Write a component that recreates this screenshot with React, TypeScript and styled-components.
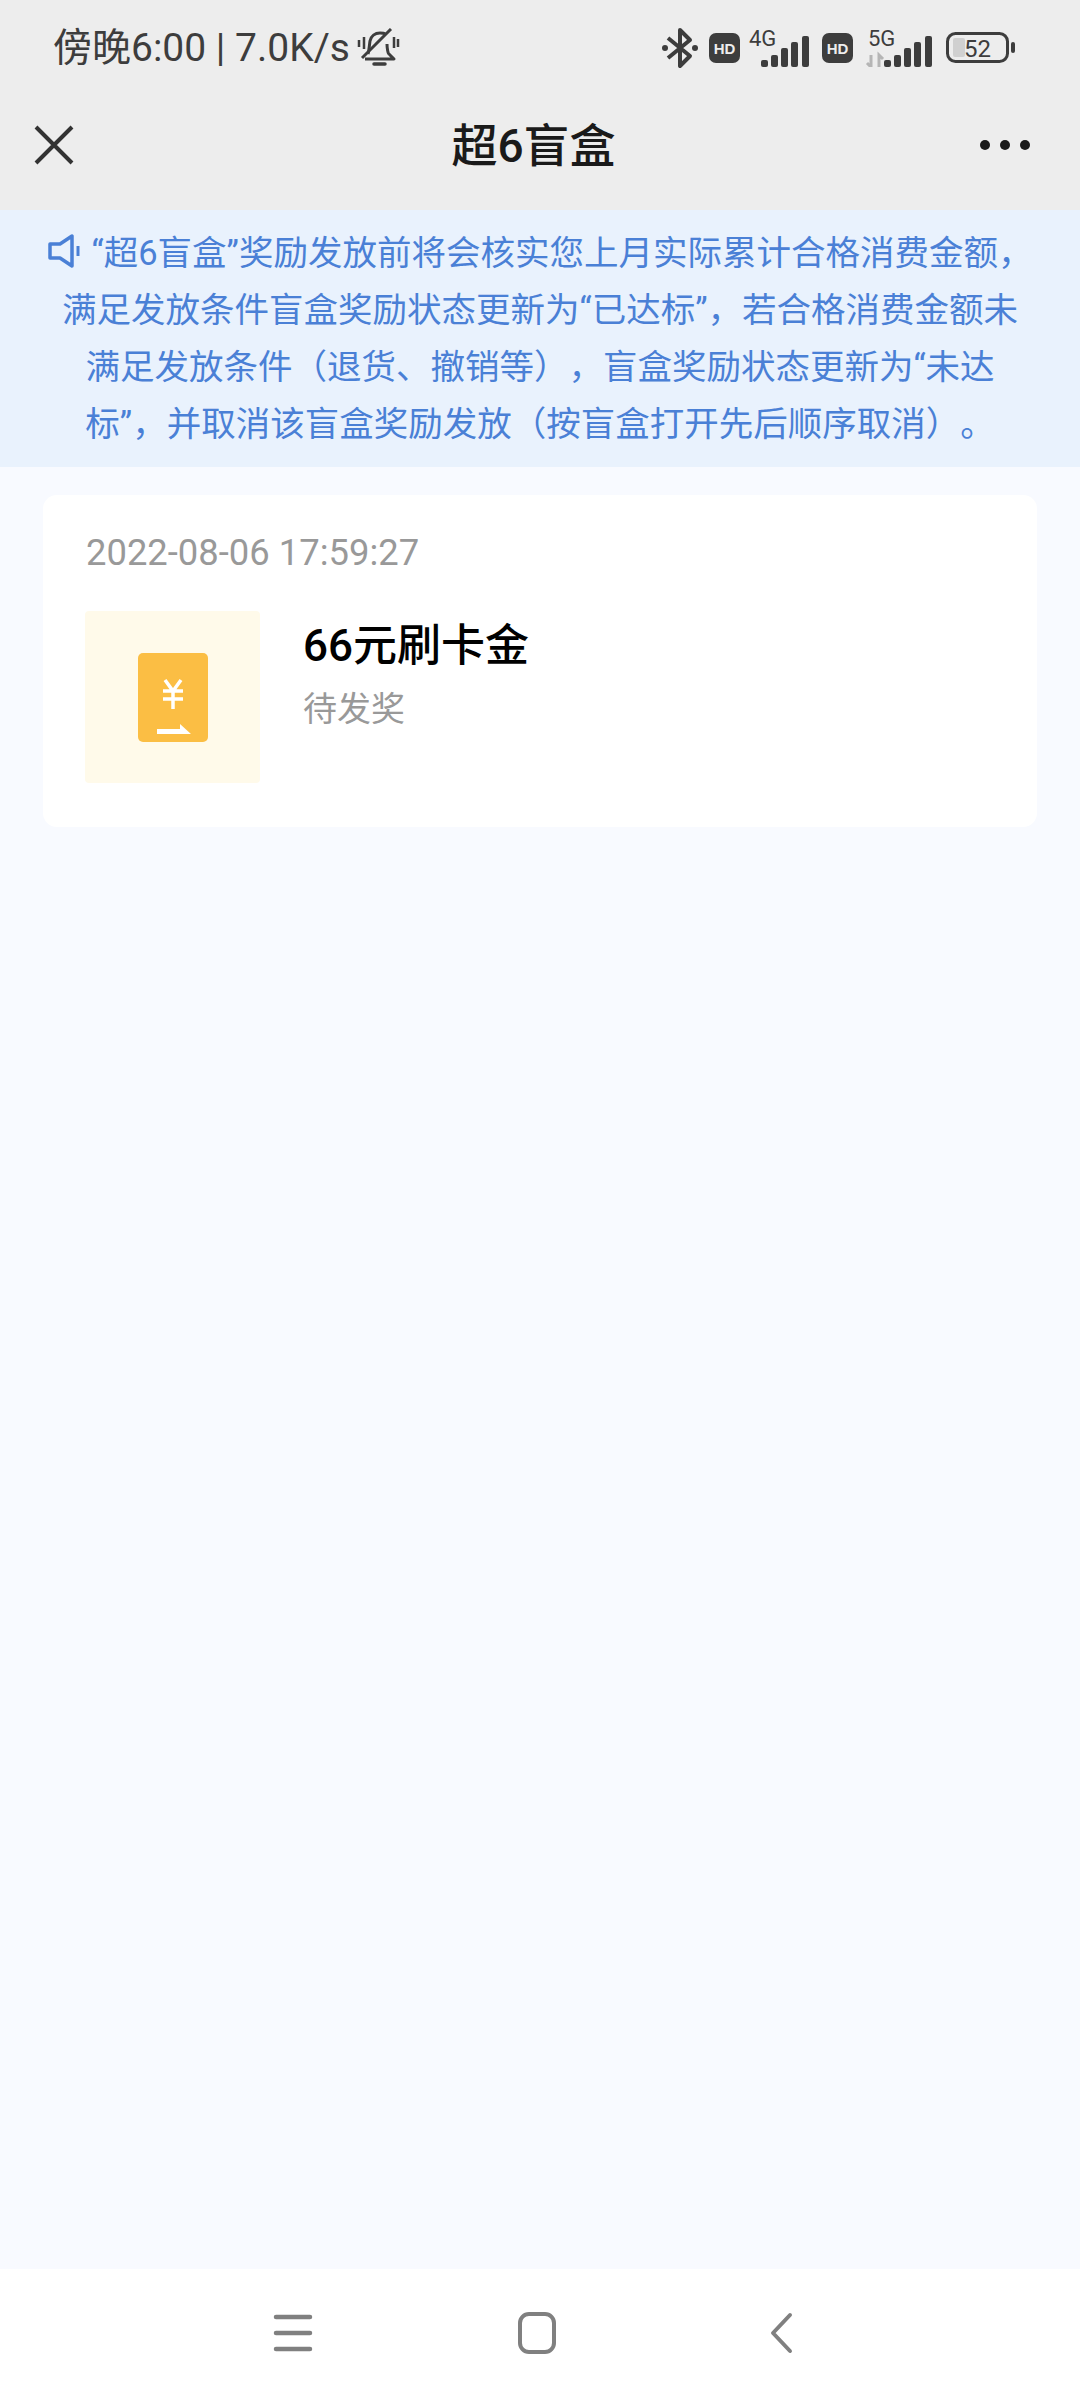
import React from "react";
import styled, { createGlobalStyle } from "styled-components";

const Global = createGlobalStyle`
  html, body { margin: 0; padding: 0; background: #f8faff; }
  * { box-sizing: border-box; }
`;

const cjk = `Roboto, "Noto Sans CJK SC", sans-serif`;

const Page = styled.div`
  width: 1080px;
  height: 2400px;
  display: flex;
  flex-direction: column;
  background: #f8faff;
  font-family: ${cjk};
`;
const Header = styled.header`
  background: #ededed;
  height: 210px;
  display: flex;
  flex-direction: column;
`;
const StatusBar = styled.div`
  height: 96px;
  display: flex;
  align-items: center;
  justify-content: space-between;
  padding: 0 65px 0 53px;
`;
const StatusLeft = styled.div`
  display: flex;
  align-items: center;
  gap: 6px;
  font-size: 39px;
  color: #3d3d3d;
  line-height: 1;
  white-space: pre;
`;
const StatusRight = styled.div`
  display: flex;
  align-items: center;
  gap: 10px;
`;
const NavBar = styled.div`
  height: 114px;
  display: grid;
  grid-template-columns: 1fr auto 1fr;
  align-items: center;
  padding: 0 50px 16px 34px;
`;
const Title = styled.h1`
  margin: 2px 0 0 3px;
  font-size: 46px;
  font-weight: 500;
  color: #1a1a1a;
  line-height: 1;
  font-family: ${cjk};
`;
const MoreWrap = styled.div`
  display: flex;
  justify-content: flex-end;
  gap: 10px;
`;
const Dot = styled.span`
  width: 10px;
  height: 10px;
  border-radius: 50%;
  background: #1a1a1a;
`;
const Banner = styled.section`
  background: #e9f2fd;
  height: 257px;
  padding: 15px 0 0;
  text-align: center;
  font-size: 34.5px;
  line-height: 57px;
  color: #4a80d6;
  white-space: nowrap;
  text-spacing-trim: space-all;
`;
const Speaker = styled.svg`
  width: 32px;
  height: 34px;
  vertical-align: -3px;
  margin-right: 12px;
`;
const Card = styled.article`
  margin: 28px 43px 0;
  height: 332px;
  background: #fff;
  border-radius: 14px;
  padding: 36px 43px 0;
`;
const DateText = styled.div`
  font-size: 36.4px;
  line-height: 44px;
  color: #999;
`;
const Row = styled.div`
  display: flex;
  margin: 36px 0 0 -1px;
  gap: 43px;
`;
const Thumb = styled.div`
  width: 175px;
  height: 172px;
  background: #fffaea;
  border-radius: 4px;
  display: flex;
  align-items: center;
  justify-content: center;
`;
const Info = styled.div`
  display: flex;
  flex-direction: column;
  padding-top: 9px;
`;
const Name = styled.div`
  font-size: 44px;
  font-weight: 500;
  color: #000;
  line-height: 52px;
`;
const Sub = styled.div`
  font-size: 34px;
  line-height: 44px;
  margin-top: 15px;
  color: #999;
`;
const Spacer = styled.div`
  flex: 1;
`;
const BottomNav = styled.nav`
  height: 131px;
  background: #fff;
  display: flex;
  align-items: center;
  padding: 0 0 4px 273px;
`;
const MenuIcon = styled.svg`
  width: 40px;
  height: 40px;
  margin-right: 205px;
`;
const HomeIcon = styled.svg`
  width: 38px;
  height: 42px;
  margin-right: 214px;
`;
const BackIcon = styled.svg`
  width: 24px;
  height: 42px;
`;
const IconSvg = styled.svg`
  display: block;
`;
const NetworkSvg = styled(IconSvg)<{ $shift: number }>`
  margin: -5px 0 0 ${(p) => p.$shift}px;
`;
const BatterySvg = styled(IconSvg)`
  margin-left: 3px;
`;

const Bars = ({ x }: { x: number }) => (
  <g fill="#3d3d3d">
    <rect x={x} y={24} width={7} height={7} rx={2} />
    <rect x={x + 10} y={19} width={7} height={12} rx={2} />
    <rect x={x + 20} y={12} width={7} height={19} rx={2} />
    <rect x={x + 30} y={6} width={7} height={25} rx={2} />
    <rect x={x + 41} y={0} width={7} height={31} rx={2} />
  </g>
);
const HdBadge = () => (
  <IconSvg width={31} height={30} viewBox="0 0 31 30">
    <rect width={31} height={30} rx={7} fill="#3d3d3d" />
    <text x={15.5} y={20.5} textAnchor="middle" fontFamily="Liberation Sans" fontWeight={700} fontSize={15} fill="#ededed">HD</text>
  </IconSvg>
);

export default function App() {
  return (
    <Page>
      <Global />
      <Header>
        <StatusBar>
          <StatusLeft>
            <span>傍晚6:00 | 7.0K/s</span>
            <IconSvg width={44} height={40} viewBox="0 0 44 40" fill="none" stroke="#3d3d3d">
              <path d="M12 26c1-3 1-6 2-13 1-5 5-8 10-8 2 0 4 0 5 1M31 16c0 4 1 10 2 10l5 5H9" strokeWidth={3} strokeLinejoin="round" />
              <path d="M6 30 35 1" strokeWidth={3} />
              <path d="M18 36h11" strokeWidth={3.5} strokeLinecap="round" />
              <path d="M3 12v7M8 9v12M38 9v11M42 11v8" strokeWidth={2.5} />
            </IconSvg>
          </StatusLeft>
          <StatusRight>
            <IconSvg width={38} height={42} viewBox="0 0 38 42" fill="none" stroke="#3d3d3d">
              <path d="M7 11 29 29 19 39V3l10 10L7 31" strokeWidth={4} strokeLinejoin="round" />
              <circle cx={4} cy={21} r={3} fill="#3d3d3d" stroke="none" />
              <circle cx={34} cy={21} r={3} fill="#3d3d3d" stroke="none" />
            </IconSvg>
            <HdBadge />
            <NetworkSvg $shift={-2} width={64} height={43} viewBox="0 -12 64 43">
              <text x={1} y={10} fontFamily="Roboto" fontSize={22} fill="#3d3d3d">4G</text>
              <Bars x={13} />
            </NetworkSvg>
            <HdBadge />
            <NetworkSvg $shift={2} width={68} height={43} viewBox="0 -12 68 43">
              <text x={3} y={10} fontFamily="Roboto" fontSize={22} fill="#3d3d3d">5G</text>
              <path d="M6 19v12M2 27l4 4M14 31V19l4 4" stroke="#b5b5b5" strokeWidth={3} fill="none" />
              <Bars x={19} />
            </NetworkSvg>
            <BatterySvg width={69} height={32} viewBox="0 0 69 32">
              <rect x={1.5} y={1.5} width={60} height={28} rx={8} fill="none" stroke="#3d3d3d" strokeWidth={3} />
              <rect x={7} y={6} width={12} height={19} rx={2} fill="#d0d0d0" />
              <text x={31.5} y={25} textAnchor="middle" fontFamily="Roboto" fontSize={24} fill="#3d3d3d">52</text>
              <rect x={65} y={10} width={4} height={11} rx={2} fill="#3d3d3d" />
            </BatterySvg>
          </StatusRight>
        </StatusBar>
        <NavBar>
          <IconSvg width={40} height={40} viewBox="0 0 40 40" stroke="#333" strokeWidth={4}>
            <path d="M2 2 38 38M38 2 2 38" />
          </IconSvg>
          <Title>超6盲盒</Title>
          <MoreWrap>
            <Dot />
            <Dot />
            <Dot />
          </MoreWrap>
        </NavBar>
      </Header>
      <Banner>
        <Speaker viewBox="0 0 32 34" fill="none" stroke="#4a80d6">
          <path d="M2 10h10L24 2v30L12 24H2z" strokeWidth={3.5} strokeLinejoin="round" />
          <path d="M30 12v10" strokeWidth={3} />
        </Speaker>
        “超6盲盒”奖励发放前将会核实您上月实际累计合格消费金额，<br />
        满足发放条件盲盒奖励状态更新为“已达标”，若合格消费金额未<br />
        满足发放条件（退货、撤销等），盲盒奖励状态更新为“未达<br />
        标”，并取消该盲盒奖励发放（按盲盒打开先后顺序取消）。
      </Banner>
      <Card>
        <DateText>2022-08-06 17:59:27</DateText>
        <Row>
          <Thumb>
            <svg width={70} height={89} viewBox="0 0 70 89">
              <rect width={70} height={89} rx={5} fill="#fbbe44" />
              <path d="M27 27l8 11 8-11M25 38h20M25 46h20M35 38v18" stroke="#fff" strokeWidth={3.5} fill="none" />
              <path d="M19 76h23v-5l11 10H19z" fill="#fff" />
            </svg>
          </Thumb>
          <Info>
            <Name>66元刷卡金</Name>
            <Sub>待发奖</Sub>
          </Info>
        </Row>
      </Card>
      <Spacer />
      <BottomNav>
        <MenuIcon viewBox="0 0 40 40" stroke="#808080" strokeWidth={4.5} strokeLinecap="round">
          <path d="M3 4h34M3 20h34M3 36h34" />
        </MenuIcon>
        <HomeIcon viewBox="0 0 38 42" fill="none" stroke="#808080" strokeWidth={4}>
          <rect x={2} y={2} width={34} height={38} rx={9} />
        </HomeIcon>
        <BackIcon viewBox="0 0 24 42" fill="none" stroke="#808080" strokeWidth={4} strokeLinecap="round" strokeLinejoin="round">
          <path d="M20 3 3 21l17 18" />
        </BackIcon>
      </BottomNav>
    </Page>
  );
}
